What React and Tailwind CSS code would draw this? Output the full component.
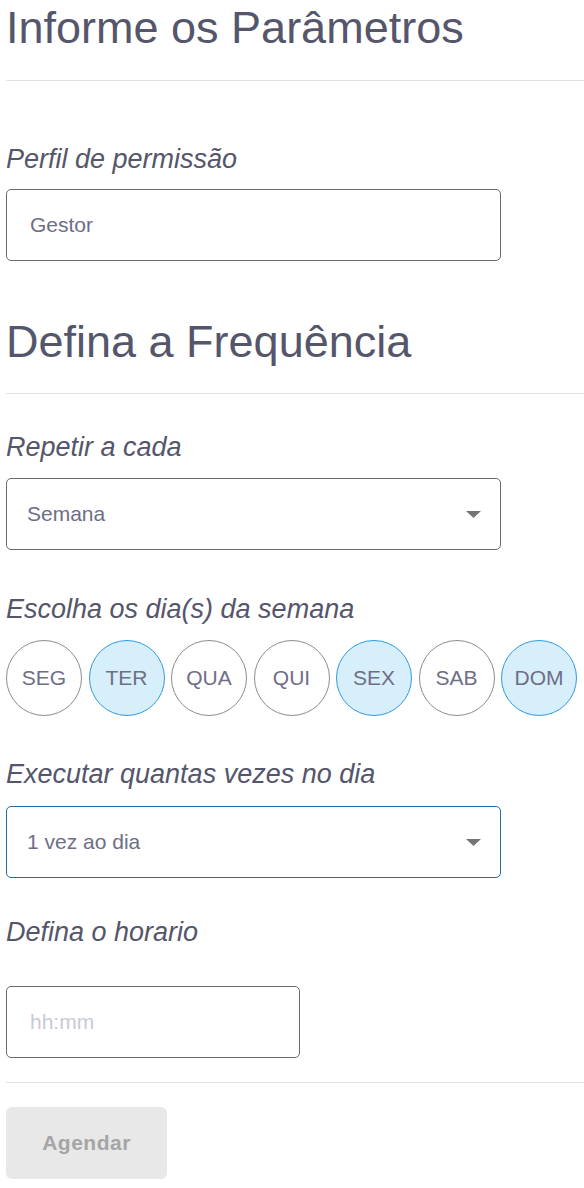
import { useState } from 'react';

const DAYS = ['SEG', 'TER', 'QUA', 'QUI', 'SEX', 'SAB', 'DOM'];

function Caret() {
  return (
    <svg width="15" height="7" viewBox="0 0 15 7" className="shrink-0">
      <path d="M0 0h15L7.5 7z" fill="#757575" />
    </svg>
  );
}

export default function App() {
  const [selected, setSelected] = useState(['TER', 'SEX', 'DOM']);

  function toggle(day) {
    setSelected((cur) => (cur.includes(day) ? cur.filter((d) => d !== day) : [...cur, day]));
  }

  return (
    <div className="min-h-[1188px] bg-white pl-[6px] font-['Liberation_Sans',Arial,sans-serif] text-[#55566b]">
      <h1 className="pt-[1px] text-[45px] leading-[54px]">Informe os Parâmetros</h1>
      <hr className="mt-[25px] border-t border-[#e3e3e3]" />

      <p className="mt-[63px] text-[27px] italic leading-[31px]">Perfil de permissão</p>
      <div className="mt-[14px] flex h-[72px] w-[495px] items-center rounded-[5px] border border-[#6b6b6b] pl-[23px] text-[21px] text-[#6e6e86]">
        Gestor
      </div>

      <h2 className="mt-[54px] text-[45px] leading-[54px]">Defina a Frequência</h2>
      <hr className="mt-[24px] border-t border-[#e3e3e3]" />

      <p className="mt-[38px] text-[27px] italic leading-[31px]">Repetir a cada</p>
      <div className="mt-[15px] flex h-[72px] w-[495px] items-center justify-between rounded-[5px] border border-[#6b6b6b] pl-[20px] pr-[19px] text-[21px] text-[#6e6e86]">
        <span>Semana</span>
        <Caret />
      </div>

      <p className="mt-[44px] text-[27px] italic leading-[31px]">Escolha os dia(s) da semana</p>
      <div className="mt-[15px] flex gap-[6.5px]">
        {DAYS.map((day) => {
          const on = selected.includes(day);
          return (
            <button
              key={day}
              type="button"
              onClick={() => toggle(day)}
              className={
                on
                  ? 'flex h-[76px] w-[76px] items-center justify-center rounded-full border border-[#2e9be3] bg-[#d7eefb] text-[21px] text-[#6e6e86]'
                  : 'flex h-[76px] w-[76px] items-center justify-center rounded-full border border-[#8c8c8c] bg-white text-[21px] text-[#6e6e86]'
              }
            >
              {day}
            </button>
          );
        })}
      </div>

      <p className="mt-[43px] text-[27px] italic leading-[31px]">Executar quantas vezes no dia</p>
      <div className="mt-[16px] flex h-[72px] w-[495px] items-center justify-between rounded-[5px] border border-[#1f6ea6] pl-[20px] pr-[19px] text-[21px] text-[#6e6e86]">
        <span>1 vez ao dia</span>
        <Caret />
      </div>

      <p className="mt-[39px] text-[27px] italic leading-[31px]">Defina o horario</p>
      <input
        placeholder="hh:mm"
        className="mt-[38px] block h-[72px] w-[294px] rounded-[5px] border border-[#6b6b6b] pl-[23px] text-[21px] text-[#6e6e86] outline-none placeholder:text-[#cacad6]"
      />
      <hr className="mt-[24px] border-t border-[#e3e3e3]" />

      <button
        type="button"
        className="mt-[24px] h-[72px] w-[161px] rounded-[6px] bg-[#e8e8e8] text-[21px] font-bold tracking-[0.5px] text-[#a5a5a5]"
      >
        Agendar
      </button>
    </div>
  );
}
